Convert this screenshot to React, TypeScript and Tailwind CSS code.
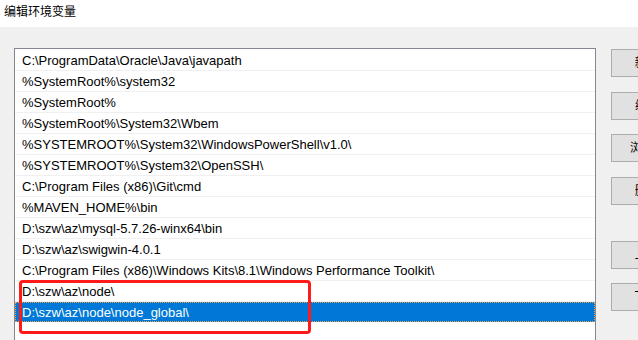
const paths = [
  "C:\\ProgramData\\Oracle\\Java\\javapath",
  "%SystemRoot%\\system32",
  "%SystemRoot%",
  "%SystemRoot%\\System32\\Wbem",
  "%SYSTEMROOT%\\System32\\WindowsPowerShell\\v1.0\\",
  "%SYSTEMROOT%\\System32\\OpenSSH\\",
  "C:\\Program Files (x86)\\Git\\cmd",
  "%MAVEN_HOME%\\bin",
  "D:\\szw\\az\\mysql-5.7.26-winx64\\bin",
  "D:\\szw\\az\\swigwin-4.0.1",
  "C:\\Program Files (x86)\\Windows Kits\\8.1\\Windows Performance Toolkit\\",
  "D:\\szw\\az\\node\\",
  "D:\\szw\\az\\node\\node_global\\",
];

const selected = 12;

const buttons = [
  { label: "新建(N)", gap: "mt-0" },
  { label: "编辑(E)", gap: "mt-[15px]" },
  { label: "浏览(B)...", gap: "mt-[14px]" },
  { label: "删除(D)", gap: "mt-[15px]" },
  { label: "上移(U)", gap: "mt-[36px]" },
  { label: "下移(O)", gap: "mt-[14px]" },
];

export default function App() {
  return (
    <div
      className="relative w-[638px] h-[340px] overflow-hidden bg-[#f0f0f0] text-[12px] text-black"
      style={{ fontFamily: '"Liberation Sans", "Noto Sans CJK SC", sans-serif' }}
    >
      <div className="h-[27px] bg-white pl-[4px] pt-[4px] leading-[16px]">编辑环境变量</div>

      <div className="flex pl-[14px] pt-[21px] gap-[15px]">
        <div className="w-[582px] h-[320px] shrink-0 bg-white border border-[#828790] pt-px text-[13px]">
          {paths.map((p, i) => (
            <div
              key={p}
              className={
                i === selected
                  ? "h-[20px] pl-[6px] leading-[19px] whitespace-nowrap bg-[#0078d7] text-white border border-dotted border-[#f0a050]"
                  : "h-[21px] pl-[7px] leading-[21px] whitespace-nowrap border-b border-[#f0f0f0]"
              }
            >
              {p}
            </div>
          ))}
        </div>

        <div className="flex flex-col pt-px shrink-0">
          {buttons.map((b) => (
            <div
              key={b.label}
              className={`${b.gap} w-[88px] h-[28px] flex items-center justify-center bg-[#e1e1e1] border border-[#adadad] whitespace-nowrap`}
            >
              {b.label}
            </div>
          ))}
        </div>
      </div>

      {/* red annotation box */}
      <div className="absolute left-[19px] top-[280px] w-[292px] h-[54px] border-[3px] border-[#ff1a1a] rounded-[4px]" />
    </div>
  );
}
